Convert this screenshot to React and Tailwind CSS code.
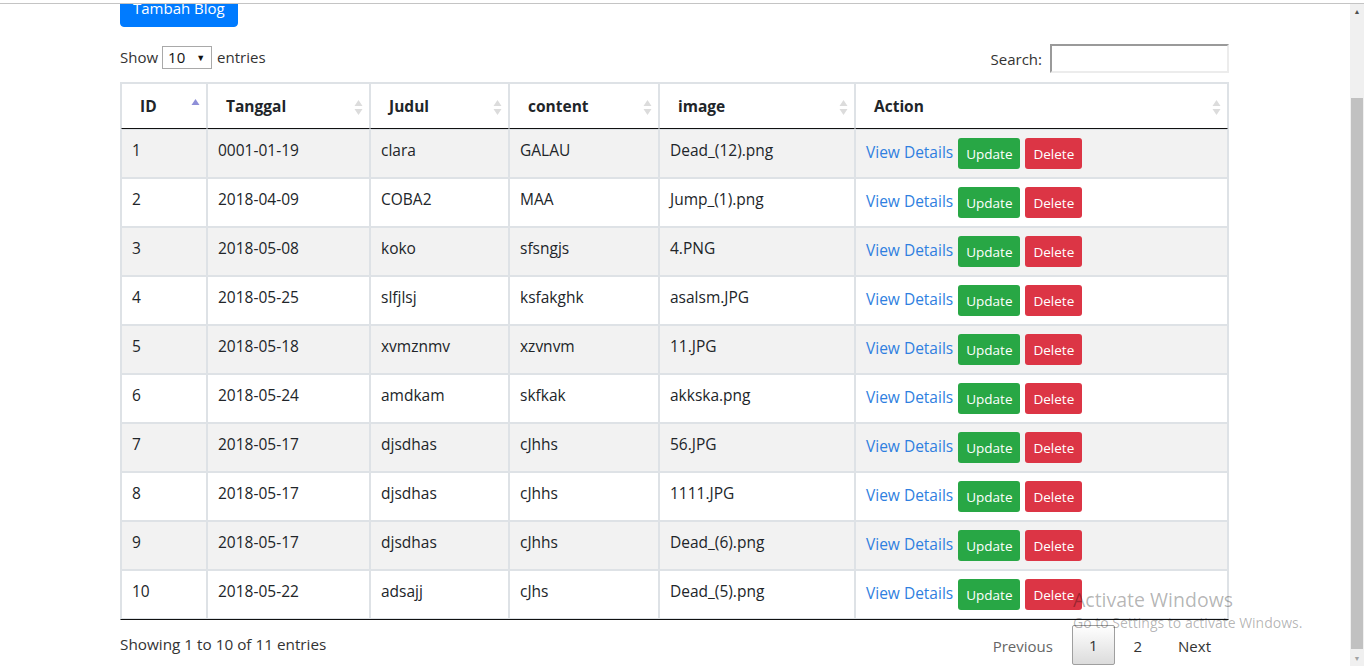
import React from "react";

const rows = [
  ["1", "0001-01-19", "clara", "GALAU", "Dead_(12).png"],
  ["2", "2018-04-09", "COBA2", "MAA", "Jump_(1).png"],
  ["3", "2018-05-08", "koko", "sfsngjs", "4.PNG"],
  ["4", "2018-05-25", "slfjlsj", "ksfakghk", "asalsm.JPG"],
  ["5", "2018-05-18", "xvmznmv", "xzvnvm", "11.JPG"],
  ["6", "2018-05-24", "amdkam", "skfkak", "akkska.png"],
  ["7", "2018-05-17", "djsdhas", "cJhhs", "56.JPG"],
  ["8", "2018-05-17", "djsdhas", "cJhhs", "1111.JPG"],
  ["9", "2018-05-17", "djsdhas", "cJhhs", "Dead_(6).png"],
  ["10", "2018-05-22", "adsajj", "cJhs", "Dead_(5).png"],
];

function SortBoth() {
  return (
    <svg width="9" height="19" viewBox="0 0 9 19" className="absolute right-[6px] top-[14px]">
      <path d="M4.5 2 L8.5 8 L0.5 8 Z" fill="#dcdcdc" />
      <path d="M0.5 11 L8.5 11 L4.5 17 Z" fill="#dcdcdc" />
    </svg>
  );
}

function SortAsc() {
  return (
    <svg width="9" height="19" viewBox="0 0 9 19" className="absolute right-[6px] top-[14px]">
      <path d="M4.5 1 L8.5 7 L0.5 7 Z" fill="#8e8fd8" />
    </svg>
  );
}

const headers = [
  { label: "ID", w: "w-[86px]", asc: true },
  { label: "Tanggal", w: "w-[163px]" },
  { label: "Judul", w: "w-[139px]" },
  { label: "content", w: "w-[150px]" },
  { label: "image", w: "w-[196px]" },
  { label: "Action", w: "w-[373px]" },
];

export default function App() {
  return (
    <div
      className="w-[1364px] h-[666px] overflow-hidden bg-white flex flex-col relative text-[#212529]"
      style={{ fontFamily: '"Open Sans", "Noto Sans", sans-serif' }}
    >
      <div className="h-[3px] bg-white shrink-0" />
      <div className="h-px bg-[#c4c4c4] shrink-0" />
      <div className="flex flex-1 min-h-0">
        <div className="flex-1 min-w-0 overflow-hidden">
          <div className="pl-[120px] w-[1229px]">
            <div className="mt-[-15px]">
              <button className="h-[38px] px-[12px] bg-[#007bff] text-white text-[15px] leading-[24px] rounded-[4px] border border-[#007bff]">
                Tambah Blog
              </button>
            </div>
            <div className="flex items-center justify-between mt-[17px] h-[29px]">
              <div className="flex items-center text-[15px] text-[#333] relative top-[-1px]">
                <span>Show</span>
                <div className="ml-[4px] w-[50px] h-[23px] border border-[#a9a9a9] flex items-center justify-between pl-[5px] pr-[6px] text-[#111]">
                  <span>10</span>
                  <span className="text-[9px] leading-none">▼</span>
                </div>
                <span className="ml-[5px]">entries</span>
              </div>
              <div className="flex items-center text-[15px] text-[#333]">
                <span className="relative top-[1px]">Search:</span>
                <div className="ml-[8px] w-[179px] h-[29px] border-2 border-t-[#9a9a9a] border-l-[#9a9a9a] border-r-[#ececec] border-b-[#ececec] bg-white" />
              </div>
            </div>
            <table className="mt-[9px] w-[1109px] table-fixed border-separate border-spacing-0 border border-[#dee2e6] border-b-[#111] text-[15.5px] leading-[24px]">
              <thead>
                <tr>
                  {headers.map((h) => (
                    <th
                      key={h.label}
                      className={`${h.w} relative text-left font-bold px-[18px] py-[10px] border border-[#dee2e6] border-b-[#111] text-[#212529]`}
                    >
                      {h.label}
                      {h.asc ? <SortAsc /> : <SortBoth />}
                    </th>
                  ))}
                </tr>
              </thead>
              <tbody>
                {rows.map((r, i) => (
                  <tr key={r[0]} className={i % 2 === 0 ? "bg-[#f2f2f2]" : "bg-white"}>
                    {r.map((c, j) => (
                      <td key={j} className="align-top px-[10px] py-[8px] border border-[#dee2e6] text-[#212529]">
                        {c}
                      </td>
                    ))}
                    <td className="align-top px-[10px] py-[8px] border border-[#dee2e6]">
                      <div className="flex items-center h-[31px]">
                        <a className="text-[#2f7fe0] mr-[5px] relative top-[-2px]">View Details</a>
                        <button className="h-[31px] px-[8px] bg-[#28a745] text-white text-[13.5px] rounded-[3px]">
                          Update
                        </button>
                        <button className="ml-[5px] h-[31px] px-[8px] bg-[#dc3545] text-white text-[13.5px] rounded-[3px]">
                          Delete
                        </button>
                      </div>
                    </td>
                  </tr>
                ))}
              </tbody>
            </table>
            <div className="flex justify-between items-start">
              <div className="mt-[12px] text-[15.3px] leading-[24px] text-[#333]">Showing 1 to 10 of 11 entries</div>
              <div className="flex items-start mt-[5px] text-[15px] leading-[24px] mr-[1px]">
                <div className="px-[16px] py-[8px] text-[#666] border border-transparent">Previous</div>
                <div className="ml-[2px] px-[16px] py-[7px] border border-[#9f9f9f] rounded-[2px] bg-gradient-to-b from-white to-[#dcdcdc] text-[#333]">1</div>
                <div className="ml-[2px] px-[16px] py-[8px] text-[#333] border border-transparent">2</div>
                <div className="ml-[2px] px-[16px] py-[8px] text-[#333] border border-transparent">Next</div>
              </div>
            </div>
          </div>
        </div>
        <div className="w-[14px] bg-[#f0f0f0] flex flex-col items-center shrink-0 mr-0">
          <div className="h-[16px] flex items-center justify-center text-[7px] text-[#505050]">▲</div>
          <div className="mt-[78px] w-[12px] h-[551px] bg-[#c1c1c1]" />
          <div className="flex-1" />
          <div className="h-[14px] flex items-center justify-center text-[7px] text-[#a3a3a3]">▼</div>
        </div>
      </div>
      <div className="absolute left-[1073px] top-[587px] pointer-events-none text-[#000]/30">
        <div className="text-[19.5px] leading-[26px]">Activate Windows</div>
        <div className="text-[14px] leading-[18px] mt-[1px]">Go to Settings to activate Windows.</div>
      </div>
    </div>
  );
}
